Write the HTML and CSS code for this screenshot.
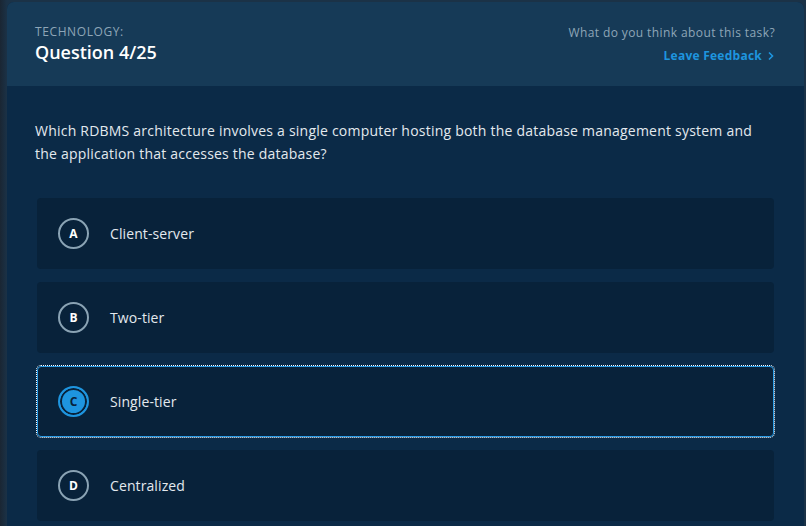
FILE: index.html
```html
<!DOCTYPE html>
<html>
<head>
<meta charset="utf-8">
<link rel="stylesheet" href="styles.css">
</head>
<body>
<div class="card">
  <header class="head">
    <div class="head-left">
      <div class="category">TECHNOLOGY:</div>
      <div class="qnum">Question 4/25</div>
    </div>
    <div class="head-right">
      <div class="ask">What do you think about this task?</div>
      <a class="feedback">Leave Feedback <svg width="8" height="10" viewBox="0 0 8 10"><path d="M2 1.5 L5.5 5 L2 8.5" fill="none" stroke="currentColor" stroke-width="1.6"/></svg></a>
    </div>
  </header>
  <main class="body">
    <p class="question">Which RDBMS architecture involves a single computer hosting both the database management system and the application that accesses the database?</p>
    <div class="options">
      <div class="option"><span class="letter">A</span><span class="label">Client-server</span></div>
      <div class="option"><span class="letter">B</span><span class="label">Two-tier</span></div>
      <div class="option selected"><span class="letter">C</span><span class="label">Single-tier</span></div>
      <div class="option"><span class="letter">D</span><span class="label">Centralized</span></div>
    </div>
  </main>
</div>
</body>
</html>
```
FILE: styles.css
```css
html, body {
  margin: 0;
  padding: 0;
  height: 100%;
  overflow: hidden;
}
body {
  background: linear-gradient(to right, #1a2633 0px, #1b3247 7px);
  font-family: "Open Sans", "Noto Sans", sans-serif;
  padding: 2px 2px 0 7px;
  box-sizing: border-box;
}
.card {
  background: #0b2a47;
  border-radius: 7px 7px 0 0;
  overflow: hidden;
  height: 100%;
}
.head {
  background: #163a57;
  height: 84px;
  box-sizing: border-box;
  padding: 22px 29px 0 28px;
  display: flex;
  justify-content: space-between;
}
.category {
  font-size: 12px;
  line-height: 16px;
  letter-spacing: 0.6px;
  color: #8ea6b8;
}
.qnum {
  font-size: 18px;
  line-height: 24px;
  font-weight: 600;
  color: #ffffff;
}
.head-right {
  text-align: right;
  display: flex;
  flex-direction: column;
  align-items: flex-end;
}
.ask {
  font-size: 12px;
  line-height: 16px;
  letter-spacing: 0.4px;
  color: #8ea6b8;
  padding-top: 1px;
}
.feedback {
  margin-top: 7px;
  font-size: 12px;
  line-height: 16px;
  font-weight: 700;
  letter-spacing: 0.25px;
  color: #1e95df;
  display: flex;
  align-items: center;
  gap: 5px;
}
.feedback svg { display: block; }
.body {
  padding: 33px 30px 0 28px;
}
.question {
  margin: 0;
  font-size: 14px;
  line-height: 23px;
  letter-spacing: 0.22px;
  color: #e3e9ee;
}
.options {
  margin-top: 33px;
  margin-left: 2px;
  display: flex;
  flex-direction: column;
  gap: 13px;
}
.option {
  height: 71px;
  box-sizing: border-box;
  background: #08223a;
  border-radius: 4px;
  border: 1px solid transparent;
  display: flex;
  align-items: center;
  padding-left: 20px;
  gap: 21px;
}
.letter {
  width: 31px;
  height: 31px;
  box-sizing: border-box;
  border: 2px solid #8aa3b4;
  border-radius: 50%;
  display: flex;
  align-items: center;
  justify-content: center;
  font-size: 12px;
  font-weight: 700;
  color: #ffffff;
}
.label {
  font-size: 14px;
  letter-spacing: 0.1px;
  color: #e3e9ee;
}
.option.selected {
  border: 1px solid #2a9ce6;
  outline: 1px dotted #ffffff;
  outline-offset: 0px;
}
.option.selected .letter {
  border-color: #1e95df;
  background: #1e95df;
  box-shadow: inset 0 0 0 2px #08223a;
  color: #08223a;
}
```
